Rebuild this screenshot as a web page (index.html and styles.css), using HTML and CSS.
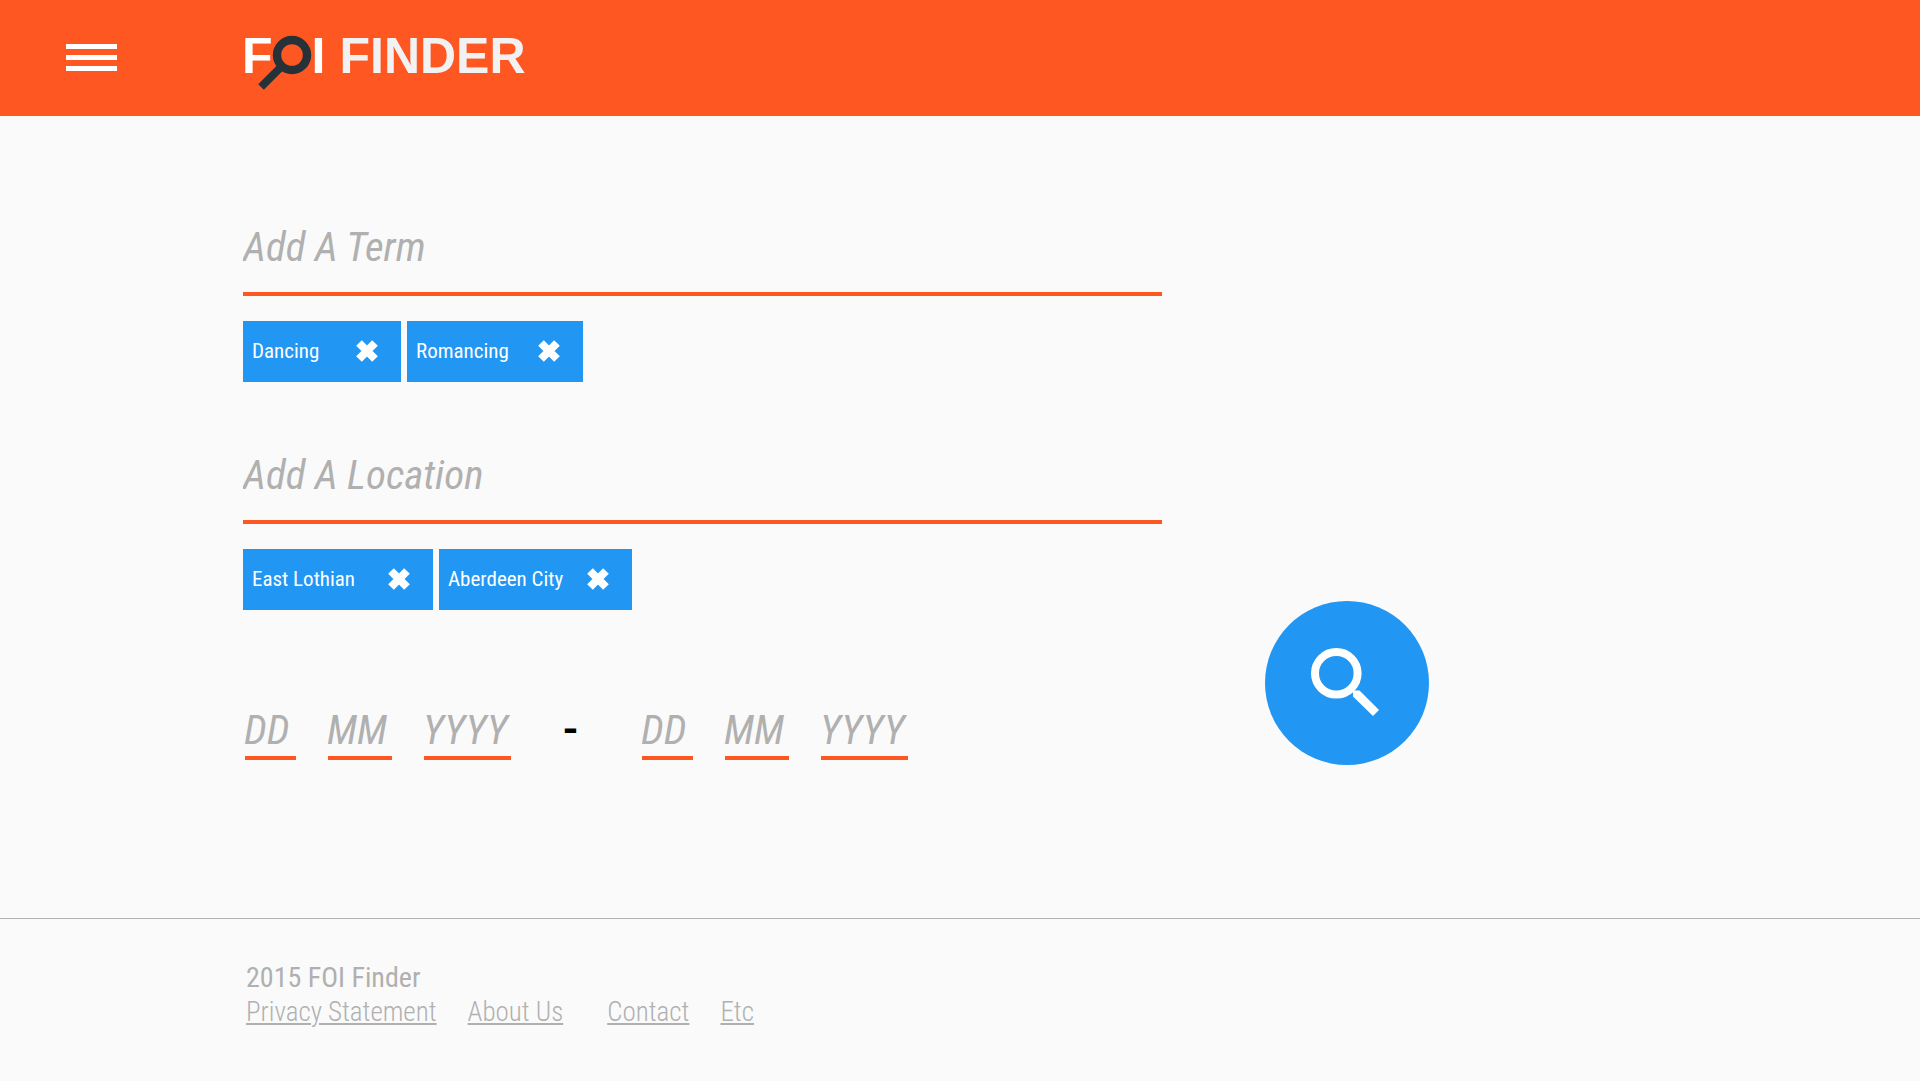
FILE: index.html
```html
<!DOCTYPE html>
<html lang="en">
<head>
<meta charset="utf-8">
<meta name="viewport" content="width=device-width, initial-scale=1">
<title>FOI Finder</title>
<link rel="stylesheet" href="styles.css">
</head>
<body>
<header class="header">
  <button class="menu" type="button" aria-label="Menu">
    <span class="menu-bar"></span><span class="menu-bar"></span><span class="menu-bar"></span>
  </button>
  <a class="logo" href="#" aria-label="FOI Finder">
    <span>F</span>
    <svg class="logo-glass" width="50" height="56" viewBox="0 0 50 56" aria-hidden="true">
      <circle cx="32" cy="19" r="15" fill="none" stroke="#263238" stroke-width="8.400"/>
      <path d="M22 30L1 51" fill="none" stroke="#263238" stroke-width="8"/>
    </svg>
    <span>I</span>
    <span class="logo-finder">FINDER</span>
  </a>
</header>

<main class="main">
  <form class="search">
    <div class="fields">
      <section class="group">
        <input class="field" type="text" placeholder="Add A Term" aria-label="Add a term">
        <ul class="tags">
          <li class="tag tag-s">Dancing
            <button class="remove" type="button" aria-label="Remove Dancing"><svg width="22" height="22" viewBox="0 0 22 22"><path d="M3 3L19 19M19 3L3 19" stroke="#fff" stroke-width="8"/></svg></button></li>
          <li class="tag tag-m">Romancing
            <button class="remove" type="button" aria-label="Remove Romancing"><svg width="22" height="22" viewBox="0 0 22 22"><path d="M3 3L19 19M19 3L3 19" stroke="#fff" stroke-width="8"/></svg></button></li>
        </ul>
      </section>
      <section class="group">
        <input class="field" type="text" placeholder="Add A Location" aria-label="Add a location">
        <ul class="tags">
          <li class="tag tag-l">East Lothian
            <button class="remove" type="button" aria-label="Remove East Lothian"><svg width="22" height="22" viewBox="0 0 22 22"><path d="M3 3L19 19M19 3L3 19" stroke="#fff" stroke-width="8"/></svg></button></li>
          <li class="tag tag-xl">Aberdeen City
            <button class="remove" type="button" aria-label="Remove Aberdeen City"><svg width="22" height="22" viewBox="0 0 22 22"><path d="M3 3L19 19M19 3L3 19" stroke="#fff" stroke-width="8"/></svg></button></li>
        </ul>
      </section>
      <div class="dates">
        <div class="date">
          <label class="part part-day"><input type="text" placeholder="DD" aria-label="From day"></label>
          <label class="part part-month"><input type="text" placeholder="MM" aria-label="From month"></label>
          <label class="part part-year"><input type="text" placeholder="YYYY" aria-label="From year"></label>
        </div>
        <span class="dash">-</span>
        <div class="date">
          <label class="part part-day"><input type="text" placeholder="DD" aria-label="To day"></label>
          <label class="part part-month"><input type="text" placeholder="MM" aria-label="To month"></label>
          <label class="part part-year"><input type="text" placeholder="YYYY" aria-label="To year"></label>
        </div>
      </div>
    </div>
    <button class="go" type="submit" aria-label="Search">
      <svg width="164" height="164" viewBox="0 0 164 164" aria-hidden="true">
        <circle cx="71.300" cy="72.300" r="21.300" fill="none" stroke="#fff" stroke-width="8"/>
        <path d="M88 89.500H94.500L114 109L108 115L88 95.500Z" fill="#fff"/>
      </svg>
    </button>
  </form>
</main>

<footer class="footer">
  <p class="copyright">2015 FOI Finder</p>
  <nav class="links">
    <a class="link" href="#">Privacy Statement</a>
    <a class="link link-about" href="#">About Us</a>
    <a class="link" href="#">Contact</a>
    <a class="link" href="#">Etc</a>
  </nav>
</footer>
</body>
</html>
```
FILE: styles.css
```css
* { box-sizing: border-box; }
body {
  margin: 0;
  min-height: 100vh;
  display: flex;
  flex-direction: column;
  background: #fafafa;
  color: #b0b0b0;
  font-family: "Roboto Condensed", Roboto, sans-serif;
}
button { border: 0; padding: 0; background: none; cursor: pointer; }
svg { display: block; overflow: visible; }

.header {
  display: flex;
  align-items: flex-start;
  height: 116px;
  background: #ff5722;
}
.menu {
  display: grid;
  gap: 6px;
  width: 51px;
  margin: 44px 125px 0 66px;
}
.menu-bar { height: 5px; background: #fff; }
.logo {
  display: flex;
  margin-top: 27px;
  color: #fff;
  font: bold 50px/58px "Liberation Sans", Arial, sans-serif;
  text-decoration: none;
}
.logo-glass { margin: 9px 2px 0 -13px; }
.logo-finder { margin-left: 14px; color: #f2f2f3; }

.main { flex: 1; padding: 105px 40px 60px 243px; }
.search { display: flex; align-items: flex-end; gap: 103px; }
.fields { flex: 0 1 919px; }
.group { height: 228px; }
.field, .part input {
  display: block;
  width: 100%;
  padding: 0;
  border: 0;
  outline: 0;
  background: none;
  color: #b0b0b0;
  font: italic 41px/50px "Roboto Condensed", Roboto, sans-serif;
}
.field { height: 75px; padding-bottom: 20px; border-bottom: 4px solid #ff5722; }
::placeholder { color: #b0b0b0; opacity: 1; }

.tags { display: flex; gap: 6px; margin: 25px 0 0; padding: 0; list-style: none; }
.tag {
  display: flex;
  align-items: center;
  justify-content: space-between;
  height: 61px;
  padding: 0 23px 2px 9px;
  background: #2196f3;
  color: #fff;
  font-size: 21px;
}
.tag-s { width: 158px; }
.tag-m { width: 176px; }
.tag-l { width: 190px; }
.tag-xl { width: 193px; }

.dates { display: flex; padding: 25px 0 0 2px; }
.date { display: flex; gap: 32px; }
.part { border-bottom: 4px solid #ff5722; }
.part input { width: calc(100% + 8px); height: 54px; margin: 0 -8px 0 -1px; padding-top: 2px; }
.part-day { width: 51px; }
.part-month { width: 64px; }
.part-year { width: 87px; }
.dash {
  width: 131px;
  padding-right: 12px;
  color: #000;
  font: bold 41px/54px Roboto, sans-serif;
  text-align: center;
}

.go { flex: none; width: 164px; height: 164px; margin-bottom: -5px; border-radius: 50%; background: #2196f3; }

.footer { padding: 42px 40px 52px 246px; border-top: 1px solid #b0b0b0; font-size: 28px; line-height: 34px; }
.copyright { margin: 0; }
.links { display: flex; gap: 31px; }
.link { color: #b0b0b0; font-size: 27px; font-weight: 300; text-decoration: underline; }
.link-about { margin-right: 13px; }
```
